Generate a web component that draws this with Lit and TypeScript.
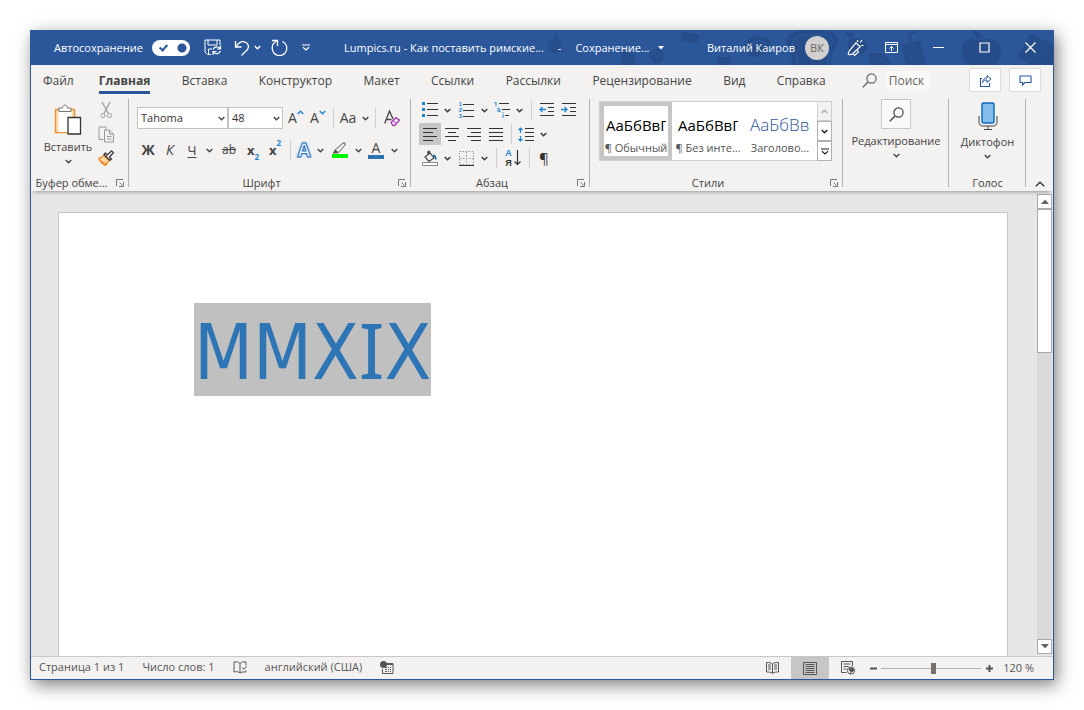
import { LitElement, html, svg, css, TemplateResult } from "lit";
import { customElement, property } from "lit/decorators.js";
import { classMap } from "lit/directives/class-map.js";

const chevron = html`<svg width="7" height="5" viewBox="0 0 7 5" fill="none" stroke="currentColor" stroke-width="1.4" aria-hidden="true"><path d="M.7 1 3.5 3.7 6.3 1" /></svg>`;

const icon = (w: number, h: number, body: TemplateResult | unknown) =>
  html`<svg width=${w} height=${h} viewBox="0 0 ${w} ${h}" fill="none" stroke="currentColor" aria-hidden="true">${body}</svg>`;

const icons = {
  save: icon(18, 17, svg`<path d="M7 15.500H3.500L1 13V1h15v5M4 1v5h9V1M4.500 15v-5H8"/><path d="M9 10.500a4 4 0 0 1 7-1M16.500 6.500v3.500H13M16.500 12a4 4 0 0 1-7 1M9 16v-3.500h3.500" stroke-width="1.200"/>`),
  undo: icon(16, 16, svg`<path d="M1.500 1v6h6M1.800 6.700C5 2 9 .8 12 2.500c3 2 3.200 5 1 7.500l-5.500 5.500" stroke-width="1.300"/>`),
  redo: icon(17, 17, svg`<path d="M1 1.500h5.500V7M6.300 2C3 3.200 1 6 1.200 9.300a7.300 7.300 0 0 0 14.600 0c0-3-1.800-5.600-4.600-6.800" stroke-width="1.300"/>`),
  more: icon(8, 7, svg`<path d="M0 1h8M1 3.200 4 6l3-2.800" stroke-width="1.200"/>`),
  caret: icon(7, 4, svg`<path d="M0 0h6L3 3.500z" fill="currentColor" stroke="none"/>`),
  arrow: icon(8, 5, svg`<path d="M0 0h8L4 4.500z" fill="currentColor" stroke="none"/>`),
  wand: icon(17, 17, svg`<path d="M1.500 15.500c-.6-1.500 0-2.600 1-4L9 3.800l4.200 4L6 14.500c-1.400 1-3 1.600-4.500 1zM6.500 15l1 1.500 4-3.500-1.500-2M10.500 1v2M13 3.500 15 1M14 6.500h2.500" stroke-width="1.200"/>`),
  ribbon: icon(13, 11, svg`<path d="M.5.5h12v10H.5zM.5 2.500h12M6.500 9V4.500M4.500 6.500l2-2 2 2"/>`),
  min: icon(11, 11, svg`<path d="M0 5.500h11"/>`),
  max: icon(11, 11, svg`<path d="M1 1h9v9H1z" stroke-width="1.200"/>`),
  close: icon(11, 11, svg`<path d="m.5.5 10 10m0-10-10 10" stroke-width="1.200"/>`),
  search: icon(15, 15, svg`<circle cx="9.500" cy="5.500" r="4.600" stroke-width="1.200"/><path d="M6 9 .8 14.200" stroke-width="1.400"/>`),
  share: icon(13, 13, svg`<path d="M3 4.500H1.500v8h9V9" stroke-width="1.100"/><path d="M3.500 8.500C4 5.500 5.500 4 8 4V1.500L12 5 8 8.500V6C6 6 4.700 7 3.500 8.500z"/>`),
  comment: icon(13, 11, svg`<path d="M1 1h11v6.500H6L3.500 10V7.500H1z" stroke-width="1.100"/>`),
  paste: icon(28, 31, svg`<path d="M1.500 5.500h19v23h-19z" fill="#fbe3b0" stroke="#f0923b" stroke-width="1.500"/><path d="M4.500 8h13v20h-13z" fill="#fff" stroke="none"/><path d="M5 7.500V4h3.500c.4-4 4.600-4 5 0H17v3.500z" fill="#fff" stroke="#777"/><path d="M14 13.500h12.500v16.500H14z" fill="#fff" stroke="#333" stroke-width="1.300"/>`),
  cut: icon(13, 17, svg`<g stroke="#a3a19f"><path d="M2 0l6.500 11.500M10 0 4 11.500" stroke-width="1.400"/><circle cx="3" cy="13.500" r="2.100"/><circle cx="9.500" cy="13.500" r="2.100"/></g>`),
  copy: icon(17, 17, svg`<g stroke="#9a9896"><path d="M5.500 13.500H1V1h7v2.500"/><path d="M6.500 4h5l4 4v8h-9zM11.500 4v4h4M9 10.500h4.500M9 13h4.500" fill="#f3f2f1"/></g>`),
  brush: icon(17, 16, svg`<path d="m1 8.500 5-3 5 5-3.500 5C4.500 14 2 12 1 8.500z" fill="#fbd9a4" stroke="#ef7d1a" stroke-width="1.300"/><path d="m3 11 5 3" stroke="#ef7d1a"/><path d="m6 4.500 6 6 1.500-1.500-2-2 4-4.500-2-1.500L9 5 7.500 3z" fill="#f3f2f1" stroke="#333" stroke-width="1.200"/>`),
  eraser: icon(17, 17, svg`<path d="M.7 13.500 5.500 1l3.500 8M2.500 9.500h5" stroke="#444" stroke-width="1.300"/><path d="m7 12.500 5-5 3.500 2.700-4.800 5.300H9z" fill="#f7e6fa" stroke="#a33bb5" stroke-width="1.300"/><path d="m9 10.500 3.500 3" stroke="#a33bb5"/>`),
  pen: icon(17, 16, svg`<path d="m4 8 8-7c1.500-.8 3 .6 2 2L7.500 10.500z" stroke="#555"/><path d="M4 7.500 7.500 11 6 11.500H1.500z" fill="#555" stroke="none"/><path d="M1 12h16v4H1z" fill="#00f500" stroke="none"/>`),
  bullets: icon(16, 16, svg`<path d="M0 0h3v3H0zM0 6h3v3H0zM0 12h3v3H0z" fill="#1e86cf" stroke="none"/><path d="M5 1.500h11M5 7.500h11M5 13.500h11"/>`),
  multi: icon(16, 16, svg`<path d="M5 1.500h10M8 7.500h8M11 13.500h4"/><path d="M.5 1 2 0v4M3 6.500c3-.8 3 .5 3 3C3 10.500 2.500 7.500 6 8M9 12v4M9 10v1" stroke="#1e86cf"/>`),
  outdent: icon(16, 14, svg`<path d="M1 .5h14M9 4.500h6M9 8.500h6M1 12.500h14"/><path d="M7 6.500H1M3.500 4 1 6.500 3.500 9" stroke="#1e86cf" stroke-width="1.300"/>`),
  indent: icon(16, 14, svg`<path d="M1 .5h14M9 4.500h6M9 8.500h6M1 12.500h14"/><path d="M0 6.500h6M3.500 4 6 6.500 3.500 9" stroke="#1e86cf" stroke-width="1.300"/>`),
  left: icon(14, 13, svg`<path d="M0 .5h14M0 4.500h10M0 8.500h14M0 12.500h10"/>`),
  center: icon(14, 13, svg`<path d="M0 .5h14M3 4.500h8M0 8.500h14M3 12.500h8"/>`),
  right: icon(14, 13, svg`<path d="M0 .5h14M4 4.500h10M0 8.500h14M4 12.500h10"/>`),
  justify: icon(14, 13, svg`<path d="M0 .5h14M0 4.500h14M0 8.500h14M0 12.500h14"/>`),
  spacing: icon(16, 15, svg`<path d="M7 1.500h9M7 5.500h9M7 9.500h9M7 13.500h9"/><path d="M2.500 1v5M.5 3l2-2 2 2M2.500 9v5M.5 12l2 2 2-2" stroke="#1e86cf" stroke-width="1.200"/>`),
  bucket: icon(16, 16, svg`<path d="M6.500 1.500v3M3 7l5-4 4 5-5 3.500zM8 3c-.5-3-3-2-2 1" stroke="#444" stroke-width="1.200"/><path d="M11 4.500c3 .3 3.500 2 3.500 6-2-1-1-3-3-3.500z" fill="#1b69ad" stroke="none"/><path d="M.5 12.500h15v3H.5z" fill="#fff" stroke="#888"/>`),
  borders: icon(15, 15, svg`<path d="M.5.5h14v13H.5zM7.500 1v13M1 7.500h13" stroke="#999" stroke-dasharray="1.500 1.500"/><path d="M0 14.500h15" stroke="#333"/>`),
  down: icon(7, 16, svg`<path d="M3.500 0v15M.5 11.500l3 3 3-3" stroke-width="1.200"/>`),
  mic: icon(20, 28, svg`<rect x="4" y="1" width="12" height="20" rx="1.500" fill="#83bdeb" stroke="#0f6cbd" stroke-width="1.500"/><path d="M1 14v6.500c0 2 1.500 3.500 3.500 3.500h11c2 0 3.500-1.500 3.500-3.500V14M10 24v3M6 27.500h8"/>`),
  launcher: icon(8, 8, svg`<path d="M.5 7V.5H7M3.500 3.500l3 3M7.500 3v4.500H3"/>`),
  up: icon(10, 6, svg`<path d="m.8 5.200 4.200-4 4.200 4" stroke-width="1.300"/>`),
  proof: icon(14, 13, svg`<path d="M7 12C5.500 10.500 3 10.500 1 11V1c2.500-.5 4.500 0 6 1.500zm0-9.500C8.500 1 10.500.5 13 1v3M7 12c1.500-1 3.500-1.200 6-1V9.500M9 6.500l2 2L14 4.500"/>`),
  macro: icon(14, 13, svg`<circle cx="3.500" cy="3.500" r="3.500" fill="currentColor" stroke="none"/><path d="M7.500 2.500h5.500v10H2.500V8"/><path d="M7 3h6" stroke-width="2"/><path d="M5 6.500h2m1 0h1m1 0h1M5 8.500h2m1 0h1m1 0h1M5 10.500h2m1 0h1m1 0h1" />`),
  read: icon(13, 12, svg`<path d="M6.500 11.500C5 10 3 10 .5 10V.5c2.500 0 4.500 0 6 1.500C8 .5 10 .5 12.500.5V10c-2.500 0-4.500 0-6 1.500zM6.500 2v9.500M2 3h3M2 5h3M2 7h3M8 3h3M8 5h3M8 7h3"/>`),
  print: icon(14, 13, svg`<path d="M.5.5h13v12H.5zM2.500 2.500h9M2.500 4.500h9M2.500 6.500h9M2.500 8.500h9M2.500 10.500h9"/>`),
  web: icon(15, 14, svg`<path d="M5.500 11.500H.5V.5h11V5M2.500 3h7M2.500 5.500h5M2.500 8h3"/><circle cx="10" cy="9.500" r="3.600"/><path d="m8 8 3-1 2 2-2 2-2-1zM9 13l1-2" fill="currentColor"/>`),
};

const doodles = svg`
  <g fill="#264d89">
    <circle cx="-18" cy="16" r="7"/><path d="m-20 9 2-6 3 2-2 5z"/><rect x="48" y="22" width="14" height="16" rx="2" transform="rotate(6 55 30)"/><circle cx="84" cy="26" r="7"/>
    <path d="m109 1 17 4-2 9-16-4z"/>
    <path d="M174 24c-7-9 2-19 12-18s15 6 10 13c-5 5-17 12-22 5z"/><rect x="144" y="27" width="14" height="12" rx="2"/>
    <path d="M219 35c-1-7 1-11-3-17-6-11 1-17 12-18h22c13 1 19 8 12 18-4 5-3 10-4 17z"/>
    <path d="M274 14c0-8 20-8 20 2 0 12-18 12-20-2z"/><path d="M281 8c-2-5-6-7-9-7 0 4 3 7 9 7z"/>
    <path d="M296 30c-3-6 5-9 12-6 7 2 12 8 8 11h-18z"/><path d="m330 15 17-5 6 25h-21z"/><path d="m337 13-2-9 8-4 1 2-6 3 1 8z"/>
    <path d="M390 14c5-7 13-5 18-4 7-2 16-2 19 7 3 8 0 14-5 18h-26c-6-4-9-13-6-21zM399 0c5 0 9 4 10 9-6-1-9-4-10-9z"/>
    <path d="m457 4 23 10v21h-22l-14-8z"/>
  </g>
  <g stroke="#2b579a" fill="none"><path d="M180 20c-4-4 2-10 8-9 5 1 6 4 2 6M224 35c2-8-2-12-4-19-2-6 3-10 10-11h20c9 1 12 5 8 11-3 6-3 12-2 19" stroke-width="1.500"/><path d="M-21 17c1 2 4 2 5 0M81 27c1 2 4 2 5 0M52 30c1 2 4 2 5 0M280 18c2 2 5 2 7 0M336 26c2 2 5 2 7 0M457 22c2 3 6 3 8 1M303 30c2 2 5 2 7 0"/></g>
  <g fill="#2b579a"><circle cx="-21" cy="14" r="1"/><circle cx="-15" cy="14" r="1"/><circle cx="81" cy="24" r="1"/><circle cx="87" cy="24" r="1"/><circle cx="337" cy="22" r="1"/><circle cx="344" cy="22" r="1"/><circle cx="455" cy="18" r="1"/><circle cx="468" cy="20" r="1"/></g>`;

/** A titled section of the ribbon, closed by a vertical divider. */
@customElement("ribbon-group")
class RibbonGroup extends LitElement {
  @property() heading = "";
  @property({ type: Boolean }) launcher = false;

  static styles = css`
    :host { display: flex; flex-direction: column; box-sizing: border-box; background: linear-gradient(#b5b3b1, #b5b3b1) right / 1px calc(100% - 8px) no-repeat; flex: none; }
    .body { flex: 1; min-height: 0; padding-top: 4px; }
    .foot { display: flex; align-items: center; height: 16px; font-size: 11px; }
    .title { flex: 1; text-align: center; white-space: nowrap; overflow: hidden; text-overflow: ellipsis; }
    .launch { display: flex; border: 0; padding: 0; margin: 0 5px 0 4px; background: none; color: #777; }
  `;

  render() {
    return html`
      <div class="body"><slot></slot></div>
      <div class="foot">
        <span class="title">${this.heading}</span>
        ${this.launcher ? html`<button class="launch" aria-label=${this.heading}>${icons.launcher}</button>` : ""}
      </div>
    `;
  }
}

@customElement("app-root")
class AppRoot extends LitElement {
  static styles = css`
    :host { display: flex; box-sizing: border-box; height: 100vh; padding: 30px; background: #fff; color: #444; font: 12px/16px "Open Sans", "Noto Sans", sans-serif; overflow: hidden; }
    button, input, select { font: inherit; color: inherit; }
    button { display: flex; align-items: center; justify-content: center; flex: none; padding: 0; border: 0; background: none; white-space: nowrap; }
    svg { flex: none; display: block; }
    .window { flex: 1; min-width: 0; display: flex; flex-direction: column; box-sizing: border-box; border: solid #2b579a; border-width: 0 1px 1px; box-shadow: 3px 5px 16px rgba(0, 0, 0, 0.5); background: #f3f2f1; }

    .titlebar { position: relative; display: flex; align-items: center; height: 35px; flex: none; background: #2b579a; color: #fff; font-size: 11px; }
    .doodles { position: absolute; right: 0; top: 0; }
    .quick, .account { position: relative; display: flex; align-items: center; }
    .quick { width: 313px; padding-left: 23px; box-sizing: border-box; }
    .autosave { display: flex; align-items: center; gap: 9px; margin-right: 14px; }
    .switch { appearance: none; margin: 0; width: 38px; height: 16px; border-radius: 8px; background: radial-gradient(circle at 30px 8px, #2b579a 4px, transparent 5px), #fff; position: relative; }
    .switch::after { content: ""; position: absolute; left: 9px; top: 3px; width: 3px; height: 6px; border: solid #2b579a; border-width: 0 2px 2px 0; transform: rotate(42deg); }
    .quick .undo { margin-left: 12px; gap: 4px; }
    .quick .redo { margin-left: 10px; }
    .quick .more { margin-left: 14px; }
    .doc { position: relative; flex: 1; display: flex; align-items: center; gap: 14px; min-width: 0; white-space: nowrap; }
    .doc button { gap: 8px; }
    .account .user { gap: 10px; margin-right: 18px; }
    .avatar { display: grid; place-items: center; width: 24px; height: 24px; border-radius: 50%; background: #d2d0ce; color: #666; }
    .account .wand { margin-right: 21px; }
    .account .options { margin-right: 17px; }
    .account .win { width: 46px; height: 35px; }

    .tabs { display: flex; align-items: center; height: 30px; flex: none; padding: 0 12px; }
    .tabs a { color: #444; text-decoration: none; line-height: 20px; border-bottom: 3px solid transparent; padding-top: 4px; }
    .tabs .file { margin-right: 25px; }
    .menu { flex: 0 1 727px; display: flex; justify-content: space-between; }
    .menu .current { font-weight: 700; border-color: #2b579a; }
    .find { display: flex; align-items: center; gap: 10px; margin-left: 36px; flex: 1; }
    .find input { width: 42px; height: 18px; padding: 0 2px; box-sizing: border-box; border: 0; background: #faf9f8; color: #666; }
    .find svg { color: #666; }
    .tabs .tool { width: 32px; height: 24px; margin-left: 8px; border: 1px solid #dddbd9; border-radius: 2px; background: #fff; color: #2b579a; box-sizing: border-box; }

    .ribbon { position: relative; display: flex; height: 96px; flex: none; box-shadow: 0 4px 4px -3px rgba(0, 0, 0, 0.35); font-size: 11px; }
    .clipboard { width: 98px; } .fonts { width: 282px; } .para { width: 179px; } .styles { width: 253px; } .editing { width: 106px; } .voice { width: 77px; }
    .paste-area { display: flex; padding-left: 9px; gap: 2px; }
    .big { flex-direction: column; gap: 4px; }
    .paste-area .big { width: 56px; margin-top: 2px; }
    .stack { display: flex; flex-direction: column; align-items: center; gap: 7px; padding-top: 3px; }
    .row { display: flex; align-items: center; height: 22px; }
    .font-rows { padding: 8px 0 0 8px; display: grid; gap: 10px; }
    .para-rows { padding: 0 0 0 8px; display: grid; gap: 2px; color: #333; }
    .b20 { width: 20px; } .b22 { width: 22px; } .b24 { width: 24px; } .b26 { width: 26px; }
    .row button { height: 22px; }
    .drop { width: 12px; } .wide { width: 13px; }
    .sep { width: 8px; height: 20px; flex: none; background: linear-gradient(#d2d0ce, #d2d0ce) center / 1px 100% no-repeat; }
    .gap10 { width: 10px; }
    .combo { position: relative; display: flex; width: 91px; }
    .combo.size { width: 55px; margin-right: 2px; }
    .combo select { appearance: none; width: 100%; height: 22px; padding: 0 3px; border: 1px solid #c3c1bf; border-radius: 0; background: #fff; color: #333; }
    .combo svg { position: absolute; right: 3px; top: 9px; }
    .glyph { font-size: 14px; }
    .bold { font-weight: 700; font-size: 14px; } .italic { font-style: italic; font-size: 14px; }
    .under { text-decoration: underline; text-underline-offset: 2px; font-size: 13px; } .strike { text-decoration: line-through; font-size: 12px; }
    .index { font-weight: 700; font-size: 13px; }
    .index sub, .index sup { font-size: 8px; line-height: 8px; color: #1e86cf; align-self: flex-end; }
    .index sup { align-self: flex-start; }
    .grow { align-items: flex-start; padding-top: 3px; box-sizing: border-box; }
    .grow svg { color: #1e86cf; }
    .effect { font-size: 19px; font-weight: 700; color: #fff; -webkit-text-stroke: 1px #1b6fbd; text-shadow: 0 0 3px #83bdeb, 0 0 2px #83bdeb; }
    .color { flex-direction: column; line-height: 14px; font-size: 14px; }
    .color::after { content: ""; width: 16px; height: 4px; background: #2e74b5; }
    .active { background: #c8c6c4; }
    .nums { display: grid; grid-template-columns: 5px 11px; font: 700 6px/6px "Liberation Sans", sans-serif; color: #1e86cf; align-items: center; }
    .nums i { height: 1px; background: #333; }
    .sort { gap: 2px; }
    .az { display: grid; font: 700 9px/10px "Liberation Sans", sans-serif; } .az b { color: #1e86cf; }
    .mark { font-size: 15px; }

    .gallery { display: flex; width: 233px; height: 60px; margin: 2px 0 0 9px; box-sizing: border-box; border: 1px solid #d2d0ce; background: #fff; }
    .cards { flex: 1; display: flex; min-width: 0; overflow: hidden; }
    .card { flex-direction: column; justify-content: flex-end; width: 72px; gap: 4px; overflow: hidden; border: 4px solid transparent; color: #555; font-size: 11px; }
    .card.chosen { border-color: #c8c6c4; }
    .sample { width: 60px; overflow: hidden; font-size: 15px; line-height: 22px; color: #000; }
    .heading { color: #2f5496; font-weight: 300; font-size: 17px; }
    .steps { display: grid; grid-template-rows: repeat(3, 1fr); width: 15px; margin: -1px; }
    .steps button { border: 1px solid #b3b1af; background: #fff; color: #222; }
    .steps .off { background: #f3f2f1; border-color: #d2d0ce; color: #aaa; }
    .editing .big, .voice .big { width: 100%; }
    .square { display: grid; place-items: center; width: 28px; height: 28px; border: 1px solid #c8c6c4; background: #fafafa; }
    .voice .big { margin-top: 3px; }
    .collapse { align-self: flex-end; margin: 0 8px 4px auto; color: #333; }

    .workspace { flex: 1; min-height: 0; display: flex; background: #e6e6e6; }
    .canvas { flex: 1; min-width: 0; padding: 21px 29px 0 27px; display: flex; }
    .sheet { flex: 1; border: 1px solid #c8c6c4; border-bottom: 0; background: #fff; padding: 90px 135px 0; }
    .typed { margin: 0; display: inline-block; background: #c0c0c0; color: #2e75b6; font: 76px/87px "DejaVu Sans Condensed", sans-serif; padding-top: 6px; }
    .typed .serifed { font-family: "Noto Sans", sans-serif; line-height: 1; }
    .scroll { width: 15px; margin: 3px 1px 2px 0; display: flex; flex-direction: column; background: #dadada; }
    .scroll button, .thumb { box-sizing: border-box; height: 15px; border: 1px solid #ababab; background: #fff; color: #666; }
    .thumb { height: 144px; }
    .fill { flex: 1; }
    .flip { transform: rotate(180deg); }

    .status { display: flex; align-items: stretch; height: 22px; flex: none; border-top: 1px solid #c8c6c4; font-size: 11px; color: #555; padding: 0 19px 0 8px; }
    .status button { height: 20px; }
    .info { display: flex; gap: 18px; flex: 1; }
    .status .view { width: 38px; height: 22px; }
    .zoom { display: flex; align-items: center; gap: 4px; margin-left: 2px; }
    .zoom input { appearance: none; width: 100px; height: 12px; margin: 0; background: linear-gradient(#b3b1af, #b3b1af) center / 100% 1px no-repeat; }
    .zoom input::-webkit-slider-thumb { appearance: none; width: 5px; height: 11px; background: #77716d; }
    .sign { width: 8px; }
    .zoom .percent { margin-left: 6px; }
  `;

  private btn(width: string, label: string, body: unknown, extra = "") {
    return html`<button class="${width} ${extra}" aria-label=${label}>${body}</button>`;
  }

  private drop(wide = false) {
    return html`<button class=${classMap({ drop: true, wide })} aria-label="Ещё">${chevron}</button>`;
  }

  private titlebar() {
    return html`
      <header class="titlebar">
        <svg class="doodles" width="510" height="35" viewBox="-30 0 510 35" aria-hidden="true">${doodles}</svg>
        <div class="quick">
          <label class="autosave">Автосохранение<input class="switch" type="checkbox" checked /></label>
          ${this.btn("", "Сохранить", icons.save)}
          ${this.btn("undo", "Отменить", html`${icons.undo}${chevron}`)}
          ${this.btn("redo", "Повторить", icons.redo)}
          ${this.btn("more", "Настройка панели", icons.more)}
        </div>
        <div class="doc">
          <span>Lumpics.ru - Как поставить римские...</span><span>-</span>
          <button>Сохранение...${icons.caret}</button>
        </div>
        <div class="account">
          <button class="user">Виталий Каиров<span class="avatar">ВК</span></button>
          ${this.btn("wand", "Новые возможности", icons.wand)}
          ${this.btn("options", "Параметры ленты", icons.ribbon)}
          ${this.btn("win", "Свернуть", icons.min)}${this.btn("win", "Развернуть", icons.max)}${this.btn("win", "Закрыть", icons.close)}
        </div>
      </header>
    `;
  }

  private tabs() {
    const names = ["Главная", "Вставка", "Конструктор", "Макет", "Ссылки", "Рассылки", "Рецензирование", "Вид", "Справка"];
    return html`
      <div class="tabs">
        <a class="file" href="#">Файл</a>
        <nav class="menu">
          ${names.map((n) => html`<a href="#" class=${classMap({ current: n === "Главная" })}>${n}</a>`)}
        </nav>
        <label class="find">${icons.search}<input type="text" value="Поиск" aria-label="Поиск" /></label>
        ${this.btn("tool", "Поделиться", icons.share)}${this.btn("tool", "Примечания", icons.comment)}
      </div>
    `;
  }

  private ribbon() {
    const sep = html`<span class="sep"></span>`;
    const sepWide = html`<span class="sep gap10"></span>`;
    return html`
      <div class="ribbon">
        <ribbon-group class="clipboard" heading="Буфер обме..." launcher>
          <div class="paste-area">
            <button class="big">${icons.paste}<span>Вставить</span>${chevron}</button>
            <div class="stack">
              ${this.btn("", "Вырезать", icons.cut)}${this.btn("", "Копировать", icons.copy)}${this.btn("", "Формат по образцу", icons.brush)}
            </div>
          </div>
        </ribbon-group>

        <ribbon-group class="fonts" heading="Шрифт" launcher>
          <div class="font-rows">
            <div class="row">
              <label class="combo"><select aria-label="Шрифт"><option>Tahoma</option></select>${chevron}</label>
              <label class="combo size"><select aria-label="Размер шрифта"><option>48</option></select>${chevron}</label>
              ${this.btn("b22", "Увеличить", html`А<span class="flip">${chevron}</span>`, "glyph grow")}
              ${this.btn("b22", "Уменьшить", html`А${chevron}`, "glyph grow")}
              ${sep}${this.btn("b22", "Регистр", "Aa", "glyph")}${this.drop()}${sep}
              ${this.btn("b26", "Очистить формат", icons.eraser)}
            </div>
            <div class="row">
              ${this.btn("b22", "Полужирный", "Ж", "bold")}${this.btn("b22", "Курсив", "К", "italic")}${this.btn("b22", "Подчёркнутый", "Ч", "under")}${this.drop(true)}
              ${this.btn("b26", "Зачёркнутый", "ab", "strike")}
              ${this.btn("b22", "Подстрочный", html`x<sub>2</sub>`, "index")}${this.btn("b22", "Надстрочный", html`x<sup>2</sup>`, "index")}
              ${sep}${this.btn("b20", "Эффекты", "A", "effect")}${this.drop()}
              ${this.btn("b26", "Выделение", icons.pen)}${this.drop()}
              ${this.btn("b24", "Цвет шрифта", "A", "color")}${this.drop()}
            </div>
          </div>
        </ribbon-group>

        <ribbon-group class="para" heading="Абзац" launcher>
          <div class="para-rows">
            <div class="row">
              ${this.btn("b22", "Маркеры", icons.bullets)}${this.drop(true)}
              ${this.btn("b24", "Нумерация", html`<span class="nums"><span>1</span><i></i><span>2</span><i></i><span>3</span><i></i></span>`)}${this.drop(true)}
              ${this.btn("b22", "Многоуровневый список", icons.multi)}${this.drop(true)}${sepWide}
              ${this.btn("b22", "Уменьшить отступ", icons.outdent)}${this.btn("b22", "Увеличить отступ", icons.indent)}
            </div>
            <div class="row">
              ${this.btn("b22", "По левому краю", icons.left, "active")}${this.btn("b22", "По центру", icons.center)}${this.btn("b22", "По правому краю", icons.right)}${this.btn("b22", "По ширине", icons.justify)}
              ${sep}${this.btn("b22", "Интервал", icons.spacing)}${this.drop()}
            </div>
            <div class="row">
              ${this.btn("b22", "Заливка", icons.bucket)}${this.drop(true)}${this.btn("b24", "Границы", icons.borders)}${this.drop(true)}
              ${sepWide}${this.btn("b24", "Сортировка", html`<span class="az"><b>А</b><span>Я</span></span>${icons.down}`, "sort")}
              ${sep}${this.btn("b22", "Все знаки", "¶", "mark")}
            </div>
          </div>
        </ribbon-group>

        <ribbon-group class="styles" heading="Стили" launcher>
          <div class="gallery">
            <div class="cards">
              <button class="card chosen"><span class="sample">АаБбВвГг</span><span>¶ Обычный</span></button>
              <button class="card"><span class="sample">АаБбВвГг</span><span>¶ Без инте...</span></button>
              <button class="card"><span class="sample heading">АаБбВвГг</span><span>Заголово...</span></button>
            </div>
            <div class="steps">
              <button class="off" aria-label="Вверх"><span class="flip">${chevron}</span></button>
              <button aria-label="Вниз">${chevron}</button>
              <button aria-label="Все стили">${icons.more}</button>
            </div>
          </div>
        </ribbon-group>

        <ribbon-group class="editing">
          <button class="big"><span class="square">${icons.search}</span><span>Редактирование</span>${chevron}</button>
        </ribbon-group>
        <ribbon-group class="voice" heading="Голос">
          <button class="big">${icons.mic}<span>Диктофон</span>${chevron}</button>
        </ribbon-group>
        ${this.btn("collapse", "Свернуть ленту", icons.up)}
      </div>
    `;
  }

  render() {
    return html`
      <div class="window">
        ${this.titlebar()}${this.tabs()}${this.ribbon()}
        <main class="workspace">
          <div class="canvas"><article class="sheet"><p class="typed">MMX<span class="serifed">I</span>X</p></article></div>
          <div class="scroll">
            <button aria-label="Прокрутить вверх"><span class="flip">${icons.arrow}</span></button>
            <div class="thumb"></div><div class="fill"></div>
            <button aria-label="Прокрутить вниз">${icons.arrow}</button>
          </div>
        </main>
        <footer class="status">
          <div class="info">
            <button>Страница 1 из 1</button><button>Число слов: 1</button>
            ${this.btn("", "Правописание", icons.proof)}<button>английский (США)</button>${this.btn("", "Макросы", icons.macro)}
          </div>
          ${this.btn("view", "Режим чтения", icons.read)}${this.btn("view", "Разметка", icons.print, "active")}${this.btn("view", "Веб-документ", icons.web)}
          <div class="zoom">
            ${this.btn("sign", "Уменьшить", icon(7, 7, svg`<path d="M0 3.500h7" stroke-width="2"/>`))}
            <input type="range" min="0" max="100" value="52" aria-label="Масштаб" />
            ${this.btn("sign", "Увеличить", icon(7, 7, svg`<path d="M0 3.500h7M3.500 0v7" stroke-width="2"/>`))}
            <button class="percent">120 %</button>
          </div>
        </footer>
      </div>
    `;
  }
}
